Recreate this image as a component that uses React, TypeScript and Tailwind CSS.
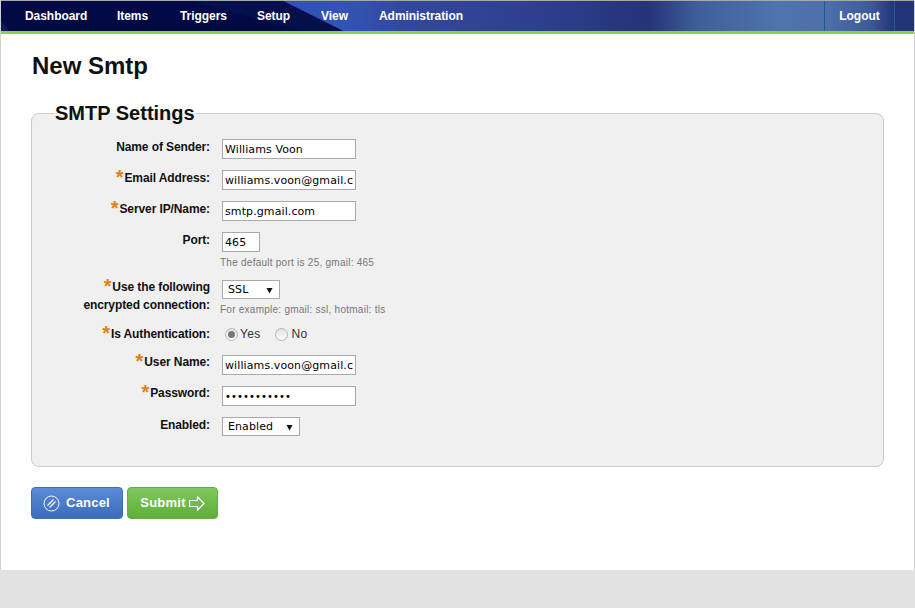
import React from 'react';

const navItems = [
  { label: 'Dashboard', width: 'w-[92px]' },
  { label: 'Items', width: 'w-[63px]' },
  { label: 'Triggers', width: 'w-[77px]' },
  { label: 'Setup', width: 'w-[64px]' },
  { label: 'View', width: 'w-[58px]' },
  { label: 'Administration', width: 'w-[114px]' },
];

const Banner = () => (
  <svg className="absolute inset-0 w-full h-full" viewBox="0 0 913 30" preserveAspectRatio="none" aria-hidden="true">
    <defs>
      <linearGradient id="blue" x1="0" y1="0" x2="1" y2="0">
        <stop offset="0" stopColor="#2f51b4" />
        <stop offset="0.1" stopColor="#3354b4" />
        <stop offset="0.2" stopColor="#32479d" />
        <stop offset="0.4" stopColor="#2e3f90" />
        <stop offset="0.58" stopColor="#26337a" />
        <stop offset="0.66" stopColor="#3f5f9b" />
        <stop offset="0.79" stopColor="#4f74ae" />
        <stop offset="0.86" stopColor="#4d6fac" />
        <stop offset="0.93" stopColor="#3f5a9b" />
        <stop offset="0.97" stopColor="#233377" />
        <stop offset="1" stopColor="#233377" />
      </linearGradient>
    </defs>
    <rect x="280" y="0" width="633" height="30" fill="url(#blue)" />
    <polygon points="0,0 282,0 342,30 0,30" fill="#020a45" />
    <polygon points="0,30 0,20 8,30" fill="#0d1a5c" />
    <polygon points="190,0 282,0 342,30 300,30" fill="#060f4e" />
  </svg>
);

const Star = () => (
  <span className="relative top-[2px] mr-[1px] text-[20px] leading-[0] font-bold text-[#e07f12]">*</span>
);

const Row = ({ label, required, className, labelClass = '-mt-[1px]', children }: { label: React.ReactNode; required?: boolean; className: string; labelClass?: string; children: React.ReactNode }) => (
  <div className={`flex ${className}`}>
    <label className={`${labelClass} w-[178px] shrink-0 text-right text-[12px] leading-[18px] font-bold tracking-[-0.1px] text-[#111]`}>
      {required && <Star />}
      {label}
    </label>
    <div className="ml-[12px]">{children}</div>
  </div>
);

const TextInput = ({ value, type = 'text', className = 'w-[134px] text-[11px]' }: { value: string; type?: string; className?: string }) => (
  <input
    readOnly
    type={type}
    value={value}
    className={`block h-[20px] ${className} border border-[#aaa] bg-white px-[2px] font-['DejaVu_Sans',sans-serif] tracking-[0.1px] text-black outline-none`}
  />
);

const FakeSelect = ({ value, className }: { value: string; className: string }) => (
  <div className={`flex h-[19px] ${className} items-center justify-between border border-[#aaa] bg-white pt-[1px] pl-[5px] pr-[6px] font-['DejaVu_Sans',sans-serif] text-[11px] tracking-[0.1px] text-black`}>
    <span>{value}</span>
    <svg width="7" height="7" viewBox="0 0 7 7" aria-hidden="true">
      <path d="M0.5 1H6.5L3.5 6.5Z" fill="#111" />
    </svg>
  </div>
);

const Radio = ({ checked }: { checked?: boolean }) => (
  <span className="flex h-[13px] w-[13px] items-center justify-center rounded-full border border-[#b5b5b5] bg-[linear-gradient(#e4e4e4,#fafafa)]">
    {checked && <span className="h-[7px] w-[7px] rounded-full bg-[#777]" />}
  </span>
);

const Hint = ({ children }: { children: React.ReactNode }) => (
  <p className="-ml-[2px] text-[10px] leading-[12px] tracking-[0.25px] text-[#777]">{children}</p>
);

export default function App() {
  return (
    <div className="flex h-[608px] w-[915px] flex-col overflow-hidden bg-white font-['Liberation_Sans',Arial,sans-serif]">
      <div className="flex flex-1 flex-col border-x border-[#d0d0d0]">
        <div className="h-[1px] bg-[#a8a8a8]" />
        <header className="relative flex h-[30px] text-[12px] font-bold text-white">
          <Banner />
          <nav className="relative flex pl-[24px] tracking-[-0.05px]">
            {navItems.map((item) => (
              <a key={item.label} className={`${item.width} leading-[30px]`}>
                {item.label}
              </a>
            ))}
          </nav>
          <a className="relative ml-[331px] w-[71px] border-x border-[#1d5a94] text-center leading-[30px]">Logout</a>
        </header>
        <div className="h-[3px] bg-[#92cf4f]" />

        <main className="px-[30px]">
          <h1 className="mt-[18px] ml-[1px] text-[24px] leading-[28px] font-bold text-[#111]">New Smtp</h1>

          <fieldset className="mt-[21px] h-[366px] rounded-[8px] border border-[#ccc] bg-[#f0f0f0]">
            <legend className="ml-[22px] px-[1px] text-[20px] leading-[24px] font-bold text-[#111]">SMTP Settings</legend>
            <div className="pt-[14px]">
              <Row label="Name of Sender:" className="">
                <TextInput value="Williams Voon" />
              </Row>
              <Row label="Email Address:" required className="mt-[11px]">
                <TextInput value="williams.voon@gmail.com" />
              </Row>
              <Row label="Server IP/Name:" required className="mt-[11px]">
                <TextInput value="smtp.gmail.com" />
              </Row>
              <Row label="Port:" className="mt-[11px]">
                <TextInput value="465" className="w-[38px] text-[11px]" />
                <div className="mt-[5px]"><Hint>The default port is 25, gmail: 465</Hint></div>
              </Row>
              <Row label={<>Use the following<br />encrypted connection:</>} required className="mt-[10px]">
                <div className="mt-[1px]"><FakeSelect value="SSL" className="w-[58px]" /></div>
                <div className="mt-[5px]"><Hint>For example: gmail: ssl, hotmail: tls</Hint></div>
              </Row>
              <Row label="Is Authentication:" required labelClass="mt-0" className="mt-[9px]">
                <div className="ml-[3px] flex h-[18px] items-center text-[12px] tracking-[0.3px] text-[#333]">
                  <Radio checked />
                  <span className="ml-[2px]">Yes</span>
                  <span className="ml-[15px]"><Radio /></span>
                  <span className="ml-[3px]">No</span>
                </div>
              </Row>
              <Row label="User Name:" required labelClass="-mt-[2px]" className="mt-[12px]">
                <TextInput value="williams.voon@gmail.com" />
              </Row>
              <Row label="Password:" required labelClass="-mt-[2px]" className="mt-[11px]">
                <TextInput value="12345678901" type="password" className="w-[134px] text-[10px]" />
              </Row>
              <Row label="Enabled:" className="mt-[11px]">
                <FakeSelect value="Enabled" className="w-[78px]" />
              </Row>
            </div>
          </fieldset>

          <div className="mt-[20px] flex gap-[4px]">
            <button className="flex h-[32px] w-[92px] items-center justify-center gap-[6px] rounded-[4px] border border-[#3d6db8] bg-[linear-gradient(#5c8cd6,#3a6cbc)] pr-[1px] text-[13px] font-bold tracking-[0.2px] text-white">
              <svg width="17" height="17" viewBox="0 0 17 17" fill="none" stroke="#fff" aria-hidden="true">
                <circle cx="8.5" cy="8.5" r="7.5" />
                <path d="M4.5 10.5 10.5 4.5M6.5 12.5 12.5 6.5" strokeWidth="1.2" />
              </svg>
              Cancel
            </button>
            <button className="flex h-[32px] w-[91px] items-center justify-center gap-[3px] rounded-[4px] border border-[#66ae42] bg-[linear-gradient(#7fc95a,#5fae3b)] text-[13px] font-bold tracking-[0.25px] text-white">
              Submit
              <svg width="16" height="15" viewBox="0 0 16 15" fill="none" stroke="#fff" strokeWidth="1.2" aria-hidden="true">
                <path d="M0.5 4.5H8.5V0.8L15 7.5 8.5 14.2V10.5H0.5Z" />
              </svg>
            </button>
          </div>
        </main>
      </div>
      <footer className="h-[38px] bg-[#e2e2e2]" />
    </div>
  );
}
